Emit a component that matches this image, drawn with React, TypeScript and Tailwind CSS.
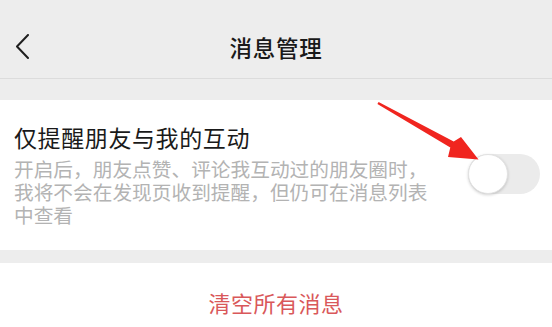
import React from "react";

const font = { fontFamily: '"Noto Sans CJK SC", "Noto Sans", sans-serif' };

const BackIcon = () => (
  <svg width="14" height="26" viewBox="0 0 14 26" fill="none">
    <path d="M13 1 L2 12.5 L13 24" stroke="#1f1f1f" strokeWidth="2" strokeLinecap="round" strokeLinejoin="round" />
  </svg>
);

// red annotation arrow pointing at the switch
const Arrow = () => (
  <svg
    className="pointer-events-none absolute left-0 top-0"
    width="552"
    height="327"
    viewBox="0 0 552 327"
  >
    <polygon
      points="378.6,102 453.7,141.4 461,137 478.5,159.5 448,157 450.3,147.6 377.4,104"
      fill="#f0251f"
    />
  </svg>
);

const Toggle = () => (
  <div className="relative h-[40px] w-[72px] shrink-0 rounded-full bg-[#ebebeb]">
    <div className="h-[40px] w-[40px] rounded-full border border-[#e2e2e2] bg-white shadow-[0_1px_3px_rgba(0,0,0,0.18)]" />
  </div>
);

export default function App() {
  return (
    <div className="relative h-[327px] w-[552px] overflow-hidden bg-[#ededed]" style={font}>
      <header className="grid h-[79px] grid-cols-[1fr_auto_1fr] items-center border-b border-[#dcdcdc] pt-[16px]">
        <div className="pl-[15px]">
          <BackIcon />
        </div>
        <h1 className="text-[22.5px] font-medium leading-[30px] tracking-[0.8px] text-[#191919]">消息管理</h1>
        <div />
      </header>

      <div className="h-[21px]" />

      <section className="flex items-center justify-between bg-white pb-[24px] pl-[14px] pr-[12px] pt-[22px]">
        <div className="w-[424px]">
          <div className="text-[23px] leading-[30px] tracking-[0.6px] text-[#1a1a1a]">仅提醒朋友与我的互动</div>
          <p className="mt-[5px] text-[19.7px] leading-[23px] text-[#b3b3b3]">
            开启后，朋友点赞、评论我互动过的朋友圈时，我将不会在发现页收到提醒，但仍可在消息列表中查看
          </p>
        </div>
        <Toggle />
      </section>

      <div className="h-[13px]" />

      <div className="flex h-[78px] items-center justify-center bg-white">
        <span className="text-[22px] leading-[30px] tracking-[0.5px] text-[#d9585a]">清空所有消息</span>
      </div>

      <Arrow />
    </div>
  );
}
